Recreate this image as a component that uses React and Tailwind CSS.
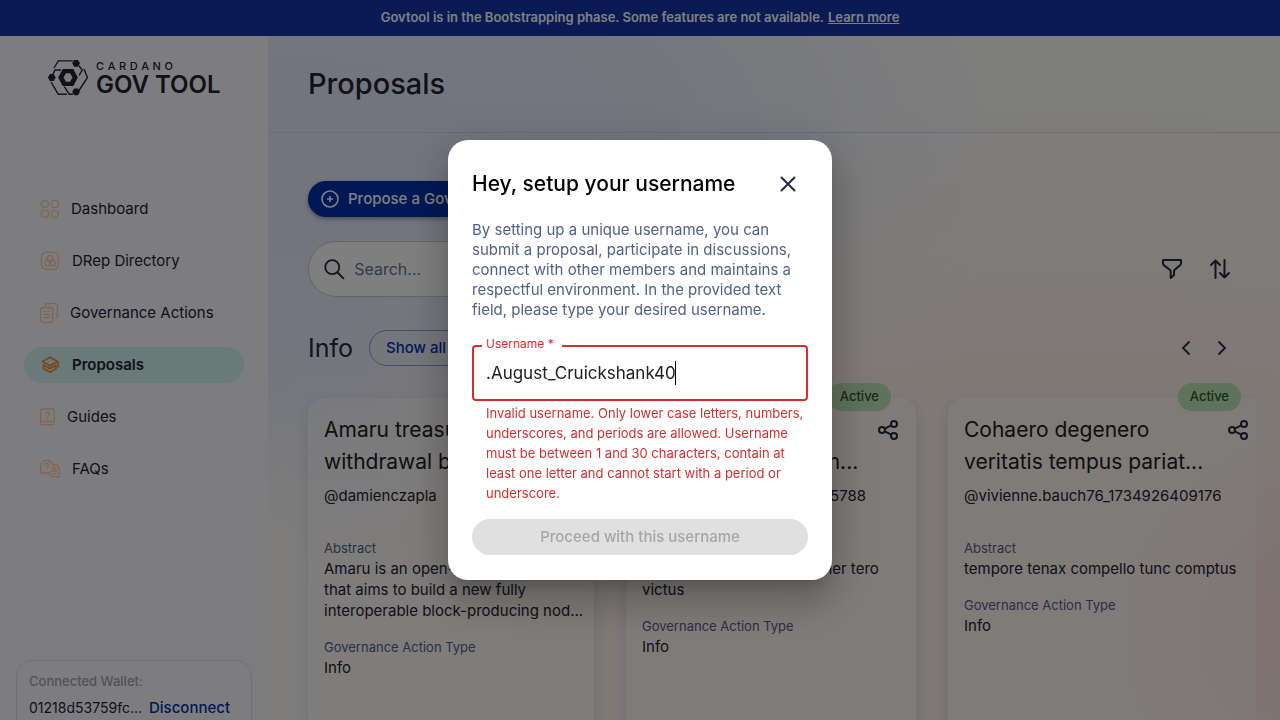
import React, { useState } from "react";

const BACKDROP =
  "bg-[radial-gradient(circle_at_104%_88%,#ffdfdb_0%,rgba(255,226,220,0)_14%),radial-gradient(ellipse_at_84%_90%,#fff2ed_0%,#fef3ed_32%,rgba(255,247,240,0)_60%),radial-gradient(ellipse_at_24%_22%,#e4eafc_0%,#e8edfc_26%,rgba(240,243,252,0)_50%)] bg-[#fdfcfa]";

function Logo() {
  return (
    <a href="#home" aria-label="Cardano Gov Tool" className="flex items-center gap-2 text-[#242232]">
      <svg width="40" height="36" viewBox="0 0 40 36" fill="none" stroke="currentColor" strokeWidth="1.4">
        <path d="M25 .9H10.3L6 8M5 14l2-4h6M31 6l3.3 4L31 15.500M36 9l3.500 8.500L31 30.500M3 22l7.300 12.300H19M16.300 26.700l5 7.600H25" />
        <path
          d="M14.700 9h10.600l4.500 8.500-4.500 8.500H14.700l-4.500-8.500zM18 13.300l-2.500 4.200 2.500 4.300h4l2.500-4.300-2.500-4.200z"
          fill="currentColor"
          fillRule="evenodd"
          stroke="none"
        />
        <g fill="currentColor" stroke="none">
          <path d="M26.200 0h3.800l2 3.300-2 3.500h-3.800l-2-3.500z" />
          <path d="M1.900 14h3.800l2 3.500-2 3.500H1.900l-2-3.500z" />
          <path d="M26.200 28.400h3.800l2 3.400-2 3.400h-3.800l-2-3.400z" />
        </g>
      </svg>
      <span className="flex flex-col">
        <span className="flex w-[77px] justify-between text-[11px] leading-[14px] font-medium" aria-hidden="true">
          {"CARDANO".split("").map((c, i) => (
            <span key={i}>{c}</span>
          ))}
        </span>
        <span className="text-2xl leading-6 font-semibold whitespace-nowrap">GOV TOOL</span>
      </span>
    </a>
  );
}

const stroke = { fill: "none", stroke: "currentColor", strokeWidth: 1.3, strokeLinecap: "round", strokeLinejoin: "round" };

function NavIcon({ name }) {
  if (name === "dashboard")
    return (
      <svg width="19" height="20" viewBox="0 0 19 20" {...stroke}>
        <circle cx="4.900" cy="4.900" r="3.500" />
        <rect x="11.400" y="1.400" width="7" height="7" rx="2.600" />
        <rect x="1.400" y="11.400" width="7" height="7" rx="2.600" />
        <circle cx="14.900" cy="14.900" r="3.500" />
      </svg>
    );
  if (name === "drep")
    return (
      <svg width="20" height="20" viewBox="0 0 20 20" {...stroke}>
        <rect x="1.400" y="1.400" width="17" height="17" rx="5" />
        <circle cx="10" cy="7.500" r="2.900" />
        <circle cx="7.600" cy="12" r="2.900" />
        <circle cx="12.400" cy="12" r="2.900" />
      </svg>
    );
  if (name === "actions")
    return (
      <svg width="18" height="20" viewBox="0 0 18 20" {...stroke}>
        <rect x=".700" y="4.500" width="12" height="15" rx="2" />
        <path d="M5.500 2.500V2c0-.800.500-1.300 1.300-1.300h9.200c.800 0 1.300.500 1.300 1.300v11.500c0 .800-.500 1.300-1.300 1.300h-.800M4 8.300h2M8 8.300h1.500M4 11.500h5.500M4 14.700h5.500" />
      </svg>
    );
  if (name === "proposals")
    return (
      <svg width="20" height="20" viewBox="0 0 20 20" {...stroke} strokeWidth="1.700">
        <path d="M10 2.300 2.500 6.500 10 10.700l7.500-4.200zM3.500 10l6.500 3.800 6-3.500M3.500 10v3.500l6.500 3.800 6-3.500v-3.500M18.200 7v5" />
      </svg>
    );
  if (name === "guides")
    return (
      <svg width="15" height="20" viewBox="0 0 15 20" {...stroke}>
        <path d="M2.500 2h10.200c1 0 1.600.600 1.600 1.500V14.500H2.300C1.300 14.500.7 15.200.7 16s.600 1.700 1.600 1.700h12M.7 16V3.700C.7 2.700 1.400 2 2.500 2" />
        <path d="M5.700 6.800c0-2.300 3.700-2.300 3.700 0 0 1.400-1.900 1.400-1.900 3M7.500 11.700v.100" />
      </svg>
    );
  return (
    <svg width="20" height="20" viewBox="0 0 20 20" {...stroke}>
      <path d="M.7 14V7.500a6.300 6.300 0 1 1 6.300 6.500z" />
      <path d="M14.500 5.500a6 6 0 0 1 4.800 6v6.300h-5.500a6 6 0 0 1-4.600-3M14.500 9.500h1.500M13.500 12h3M12.500 14.700h4" />
      <path d="M5.300 5.800c0-2.200 3.600-2.200 3.600 0 0 1.400-1.800 1.300-1.800 2.800M7.100 10.700v.100" />
    </svg>
  );
}

const NAV = [
  ["dashboard", "Dashboard"],
  ["drep", "DRep Directory"],
  ["actions", "Governance Actions"],
  ["proposals", "Proposals"],
  ["guides", "Guides"],
  ["faqs", "FAQs"],
];

function Sidebar() {
  return (
    <aside className="flex w-[268px] shrink-0 flex-col bg-[#fbfbff]">
      <div className="flex-none pt-[23px] pl-12">
        <Logo />
      </div>
      <nav className="mt-[94px] flex flex-col gap-4 px-6">
        {NAV.map(([icon, label]) => {
          const active = icon === "proposals";
          return (
            <a
              key={icon}
              href={"#" + icon}
              className={
                active
                  ? "flex h-9 items-center gap-3 rounded-full bg-[#d5f4f3] px-4 text-[15px] font-semibold text-[#242232]"
                  : "flex h-9 items-center gap-3 rounded-full px-4 text-[15px] text-[#242232]"
              }
            >
              <span className={active ? "text-[#f78c2a]" : "text-[#ffcba4]"}>
                <NavIcon name={icon} />
              </span>
              {label}
            </a>
          );
        })}
      </nav>
      <div className="mx-4 mt-auto -mb-6 rounded-2xl border border-[#d6e2ff] px-3 pt-3 pb-6">
        <p className="text-[13px] leading-4 font-medium text-[#a5a6a8]">Connected Wallet:</p>
        <div className="mt-2 flex items-center gap-2 text-[15px] leading-[22px]">
          <span className="w-28 text-sm whitespace-nowrap text-[#242232]">01218d53759fc...</span>
          <button type="button" className="font-medium text-[#0033ad]">Disconnect</button>
        </div>
      </div>
    </aside>
  );
}

function ShareIcon() {
  return (
    <svg width="24" height="24" viewBox="0 0 24 24" fill="none" stroke="#212a3d" strokeWidth="2">
      <circle cx="18" cy="6" r="3" />
      <circle cx="6" cy="12" r="3" />
      <circle cx="18" cy="18" r="3" />
      <path d="m8.700 10.700 6.600-3.300M8.700 13.300l6.600 3.300" />
    </svg>
  );
}

function Lines({ lines }) {
  return lines.map((line) => (
    <span key={line} className="block whitespace-nowrap">{line}</span>
  ));
}

function Card({ title, user, abstract, width }) {
  return (
    <article className={width + " relative h-[400px] shrink-0 rounded-2xl bg-white/30 px-4 pt-4 shadow-[0_4px_15px_0_rgba(47,98,220,0.16)]"}>
      <span className="absolute -top-[15px] right-[25px] flex h-7 items-center rounded-full bg-[#c0e4ba] px-3 text-[13px] font-medium text-[#2c5826]">
        Active
      </span>
      <div className="flex justify-between">
        <h3 className="text-[21px] leading-8 text-[#212121]"><Lines lines={title} /></h3>
        <button type="button" aria-label="Share" className="flex h-8 w-6 items-center">
          <ShareIcon />
        </button>
      </div>
      <p className="mt-2 text-[15px] leading-5 text-[#242232]">{user}</p>
      <p className="mt-8 text-[13px] leading-5 text-[#506288]">Abstract</p>
      <p className="text-[15px] leading-[21px] text-[#242232]"><Lines lines={abstract} /></p>
      <p className="mt-4 text-[13px] leading-5 text-[#506288]">Governance Action Type</p>
      <p className="text-[15px] leading-[21px] text-[#242232]">Info</p>
    </article>
  );
}

function Proposals() {
  return (
    <main className="min-w-0 flex-1 overflow-hidden">
      <header className="flex h-[97px] items-center border-b border-[#cddafc] px-10">
        <h1 className="text-[29px] leading-9 font-medium text-[#242232]">Proposals</h1>
      </header>
      <div className="px-10 pt-12">
        <button
          type="button"
          className="flex h-9 items-center gap-2 rounded-full bg-[#0033ad] pr-4 pl-3 text-[15px] font-medium text-white shadow-[0_2px_4px_rgba(0,0,0,0.35)]"
        >
          <svg width="20" height="20" viewBox="0 0 20 20" fill="none" stroke="currentColor" strokeWidth="1.600">
            <circle cx="10" cy="10" r="8" />
            <path d="M10 7v6M7 10h6" />
          </svg>
          Propose a Governance Action
        </button>
        <div className="mt-6 flex items-center justify-between">
          <label className="flex h-14 w-[500px] items-center gap-2 rounded-full border border-[#c8c8c8] bg-white px-[13px]">
            <svg width="26" height="26" viewBox="0 0 26 26" fill="none" stroke="#212a3d" strokeWidth="2" strokeLinecap="round">
              <circle cx="11" cy="11" r="7.500" />
              <path d="m17 17 6 6" />
            </svg>
            <input
              type="search"
              aria-label="Search"
              placeholder="Search..."
              className="w-full bg-transparent text-base outline-none placeholder:text-[#65759a]"
            />
          </label>
          <div className="flex gap-2">
            <button type="button" aria-label="Filter" className="flex size-10 items-center justify-center">
              <svg width="24" height="24" viewBox="0 0 24 24" fill="none" stroke="#212a3d" strokeWidth="2" strokeLinejoin="round">
                <path d="M3 3h18v3.500c0 .700-.300 1.200-.800 1.600L14.500 13c-.500.500-.500 1-.500 1.600V18l-3.300 3v-6.400c0-.600-.200-1.100-.600-1.600L3.800 8.100C3.300 7.600 3 7.100 3 6.500z" />
              </svg>
            </button>
            <button type="button" aria-label="Sort" className="flex size-10 items-center justify-center">
              <svg width="24" height="24" viewBox="0 0 24 24" fill="none" stroke="#212a3d" strokeWidth="2" strokeLinecap="round" strokeLinejoin="round">
                <path d="M7.500 21V3.500M3 8l4.500-4.500L12 8M16.500 3v17.500M12 16l4.500 4.500L21 16" />
              </svg>
            </button>
          </div>
        </div>
        <section className="mt-[33px]">
          <div className="flex items-center justify-between">
            <div className="flex items-center gap-4">
              <h2 className="text-[25px] leading-8 text-[#212a3d]">Info</h2>
              <button type="button" className="h-9 rounded-full border border-[#8099d6] px-4 text-[15px] font-medium text-[#0033ad]">
                Show all
              </button>
            </div>
            <div className="flex">
              <button type="button" aria-label="Previous" className="flex size-9 items-center justify-center">
                <svg width="24" height="24" viewBox="0 0 24 24" fill="none" stroke="#212a3d" strokeWidth="1.800" strokeLinecap="round">
                  <path d="m15 6-6 6 6 6" />
                </svg>
              </button>
              <button type="button" aria-label="Next" className="flex size-9 items-center justify-center">
                <svg width="24" height="24" viewBox="0 0 24 24" fill="none" stroke="#212a3d" strokeWidth="1.800" strokeLinecap="round">
                  <path d="m9 6 6 6-6 6" />
                </svg>
              </button>
            </div>
          </div>
          <div className="-mr-4 -ml-4 flex gap-8 overflow-hidden pt-8 pl-4">
            <Card
              width="w-[286px]"
              title={["Amaru treasury", "withdrawal budget"]}
              user="@damienczapla"
              abstract={["Amaru is an open-source project", "that aims to build a new fully", "interoperable block-producing nod..."]}
            />
            <Card
              width="w-[290px]"
              title={["Thema curia volup", "ater adipiscor totam..."]}
              user="@marco.wolf_17349264095788"
              abstract={["confero sumo aquae ut tener tero", "victus"]}
            />
            <Card
              width="w-[318px]"
              title={["Cohaero degenero", "veritatis tempus pariat..."]}
              user="@vivienne.bauch76_1734926409176"
              abstract={["tempore tenax compello tunc comptus"]}
            />
          </div>
        </section>
      </div>
    </main>
  );
}

function UsernameDialog() {
  const [name, setName] = useState(".August_Cruickshank40");
  return (
    <div className="fixed inset-0 flex items-center justify-center bg-black/50">
      <form
        role="dialog"
        aria-modal="true"
        aria-labelledby="dialog-title"
        className="w-96 rounded-[20px] bg-white px-6 pt-6 pb-[25px] shadow-[0_11px_15px_-7px_rgba(0,0,0,0.2),0_24px_38px_3px_rgba(0,0,0,0.14),0_9px_46px_8px_rgba(0,0,0,0.12)]"
      >
        <div className="flex h-10 items-center justify-between">
          <h2 id="dialog-title" className="text-[21px] font-medium text-black">Hey, setup your username</h2>
          <button type="button" aria-label="Close" className="flex size-10 items-center justify-center">
            <svg width="24" height="24" viewBox="0 0 24 24" fill="none" stroke="#212a3d" strokeWidth="2" strokeLinecap="round">
              <path d="m5.500 5.500 13 13M18.500 5.500l-13 13" />
            </svg>
          </button>
        </div>
        <p className="mt-4 text-[15px] leading-5 text-[#506288]">
          <Lines
            lines={[
              "By setting up a unique username, you can",
              "submit a proposal, participate in discussions,",
              "connect with other members and maintains a",
              "respectful environment. In the provided text",
              "field, please type your desired username.",
            ]}
          />
        </p>
        <div className="relative mt-[25px]">
          <label htmlFor="username" className="absolute -top-[9px] left-[10px] bg-white pr-2 pl-1 text-xs leading-4 text-[#d32f2f]">
            Username *
          </label>
          <input
            id="username"
            value={name}
            onChange={(e) => setName(e.target.value)}
            aria-invalid="true"
            aria-describedby="username-help"
            className="h-14 w-full rounded border-2 border-[#d32f2f] bg-white px-3 text-[17px] text-[#212121] outline-none"
          />
          <span className="absolute top-4 left-[203px] h-6 w-px bg-black" />
        </div>
        <p id="username-help" className="mt-[2px] px-[14px] text-[13px] leading-5 text-[#d32f2f]">
          <Lines
            lines={[
              "Invalid username. Only lower case letters, numbers,",
              "underscores, and periods are allowed. Username",
              "must be between 1 and 30 characters, contain at",
              "least one letter and cannot start with a period or",
              "underscore.",
            ]}
          />
        </p>
        <button type="submit" disabled className="mt-4 h-9 w-full rounded-full bg-[#e0e0e0] text-[15px] font-medium text-[#a6a6a6]">
          Proceed with this username
        </button>
      </form>
    </div>
  );
}

export default function App() {
  return (
    <div className={"flex h-screen flex-col overflow-hidden font-['Inter',sans-serif] " + BACKDROP}>
      <div className="flex h-9 shrink-0 items-center justify-center gap-1 bg-[#1434a8] text-[13px] font-semibold text-white">
        <span>Govtool is in the Bootstrapping phase. Some features are not available.</span>
        <a href="#learn" className="underline">Learn more</a>
      </div>
      <div className="flex min-h-0 flex-1">
        <Sidebar />
        <Proposals />
      </div>
      <UsernameDialog />
    </div>
  );
}
